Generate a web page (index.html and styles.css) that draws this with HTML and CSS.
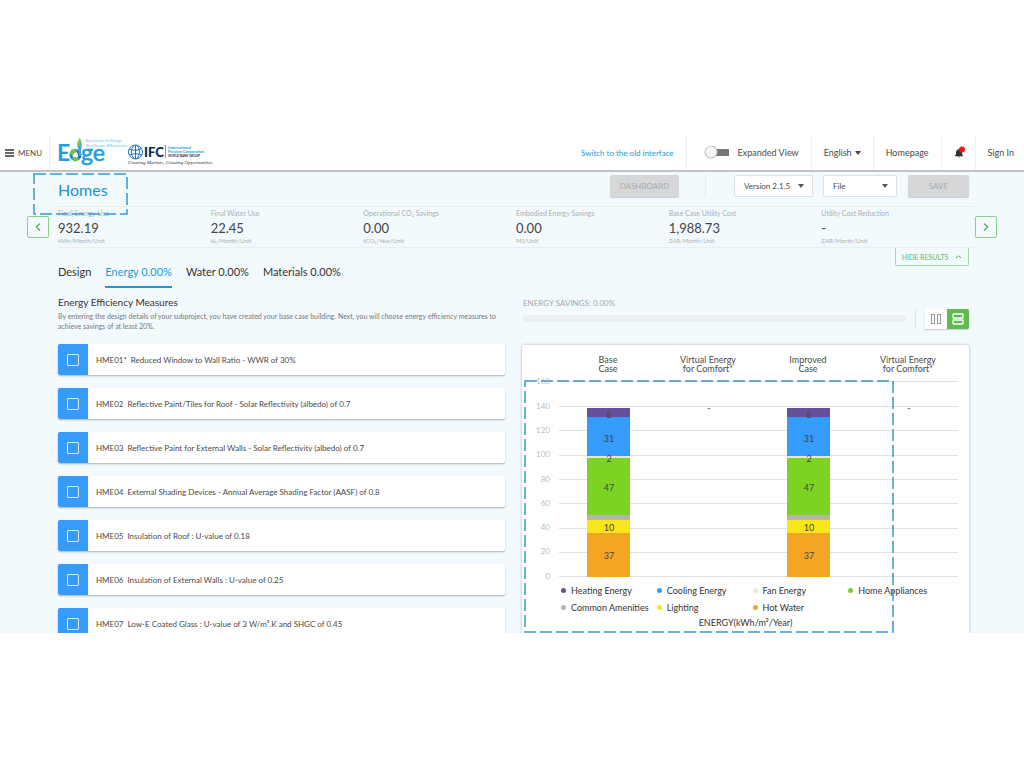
FILE: index.html
```html
<!DOCTYPE html>
<html lang="en">
<head>
<meta charset="utf-8">
<title>Edge – Homes</title>
<link rel="stylesheet" href="styles.css">
</head>
<body>
<div class="app">
  <header class="topbar">
    <button class="menu" type="button">
      <svg width="9" height="8" viewBox="0 0 9 8"><path d="M0 1h9M0 4h9M0 7h9" stroke="#333" stroke-width="1.5"/></svg>
      MENU
    </button>
    <a class="logo" href="#" aria-label="Edge and IFC">
      <svg width="160" height="34" viewBox="0 0 160 34">
        <g fill="#1ba1e0" font-family="Lato, sans-serif">
          <text x="-1" y="26" font-size="23" font-weight="700">E</text>
          <text x="23" y="26" font-size="23" font-weight="400" stroke="#1ba1e0" stroke-width=".6">ge</text>
          <text x="28" y="7" font-size="4" opacity=".7">Excellence in Design</text>
          <text x="28" y="12" font-size="4" opacity=".7">For Greater Efficiencies</text>
        </g>
        <circle cx="17.500" cy="20" r="4.500" fill="none" stroke="#1b8fd0" stroke-width="3.200"/>
        <path d="M11.500 19l2-4.500 4-1 1 3-4 3.500z" fill="#7ac143"/>
        <path d="M14 24l3-2 4 1-2 3-3 .5z" fill="#7ac143"/>
        <path d="M19 17l3-2 1 7-2 1z" fill="#1d5f9e"/>
        <path d="M20 13c-1-2-1-5 3-8 1 4 1 7 0 10v6h-2z" fill="#3fa9e0"/>
        <path d="M19 10c0-3 1-5 3-7 1.500 3 1 6-1 8z" fill="#8cc63f"/>
        <g fill="none" stroke="#1b75bc" stroke-width="1">
          <circle cx="77.500" cy="17" r="7"/>
          <path d="M71 14q7 3 13-1M71 20q6-3 13 0M76 10q-5 7 0 14M79 10q5 7 0 14M77.500 10v14"/>
        </g>
        <text x="86" y="22" font-size="13" font-weight="900" fill="#0b2a4a" font-family="Lato, sans-serif">IFC</text>
        <path d="M107.500 10v13" stroke="#4aa8dc"/>
        <g font-family="Lato, sans-serif" font-weight="700" fill="#189cd8">
          <text x="110" y="14" font-size="4">International</text>
          <text x="110" y="18" font-size="4">Finance Corporation</text>
          <text x="110" y="22" font-size="3" fill="#0b2a4a">WORLD BANK GROUP</text>
        </g>
        <text x="70" y="29" font-size="5" font-style="italic" fill="#333" font-family="Liberation Serif, serif">Creating Markets, Creating Opportunities</text>
      </svg>
    </a>
    <nav class="nav">
      <a class="nav-item switch-link" href="#">Switch to the old interface</a>
      <label class="nav-item expanded"><input class="toggle" type="checkbox">Expanded View</label>
      <button class="nav-item" type="button">English <span class="caret"></span></button>
      <a class="nav-item" href="#">Homepage</a>
      <button class="nav-item bell" type="button" aria-label="Notifications">
        <svg width="12" height="13" viewBox="0 0 12 13"><path d="M5 3c-2 .3-3 1.800-3 4 0 1.500-.5 2.300-1.500 3.200h9C8.500 9.300 8 8.500 8 7c0-2.200-1-3.700-3-4zM3.800 10.700h2.400q-1.200 1.500-2.400 0z" fill="#333"/><circle cx="8" cy="3.500" r="3" fill="#f21616"/></svg>
      </button>
      <a class="nav-item" href="#">Sign In</a>
    </nav>
  </header>

  <main class="page">
    <div class="title-row">
      <div class="title-wrap">
        <h1>Homes</h1>
        <svg class="mark mark-title" aria-hidden="true"><rect x="1" y="1" width="93" height="40"/></svg>
      </div>
      <div class="tools">
        <button class="gray dash" type="button" disabled>DASHBOARD</button>
        <span class="tool-line"></span>
        <select class="version" aria-label="Version"><option>Version 2.1.5</option></select>
        <select class="file" aria-label="File"><option>File</option></select>
        <button class="gray save" type="button" disabled>SAVE</button>
      </div>
    </div>

    <section class="results">
      <button class="arrow" type="button" aria-label="Previous"><svg width="6" height="10" viewBox="0 0 6 10"><path d="M5 1.500L1.500 5 5 8.500"/></svg></button>
      <div class="metrics">
        <div class="metric"><span>Final Energy Use</span><strong>932.19</strong><small>kWh/Month/Unit</small></div>
        <div class="metric"><span>Final Water Use</span><strong>22.45</strong><small>kL/Month/Unit</small></div>
        <div class="metric"><span>Operational CO₂ Savings</span><strong>0.00</strong><small>tCO₂/Year/Unit</small></div>
        <div class="metric"><span>Embodied Energy Savings</span><strong>0.00</strong><small>MJ/Unit</small></div>
        <div class="metric"><span>Base Case Utility Cost</span><strong>1,988.73</strong><small>ZAR/Month/Unit</small></div>
        <div class="metric"><span>Utility Cost Reduction</span><strong>-</strong><small>ZAR/Month/Unit</small></div>
      </div>
      <button class="arrow" type="button" aria-label="Next"><svg width="6" height="10" viewBox="0 0 6 10"><path d="M1 1.500L4.500 5 1 8.500"/></svg></button>
    </section>

    <div class="tab-row">
      <nav class="tabs">
        <a href="#">Design</a>
        <a class="active" href="#">Energy 0.00%</a>
        <a href="#">Water 0.00%</a>
        <a href="#">Materials 0.00%</a>
      </nav>
      <button class="hide" type="button">HIDE RESULTS <svg width="7" height="5" viewBox="0 0 7 5"><path d="M1 4l2.500-2.500L6 4" fill="none" stroke="#62b862"/></svg></button>
    </div>

    <div class="columns">
      <section class="measures">
        <h2>Energy Efficiency Measures</h2>
        <p>By entering the design details of your subproject, you have created your base case building. Next, you will choose energy efficiency measures to achieve savings of at least 20%.</p>
        <div class="list">
          <label class="row"><span class="tick"><input type="checkbox"></span><span class="code">HME01*</span>Reduced Window to Wall Ratio - WWR of 30%</label>
          <label class="row"><span class="tick"><input type="checkbox"></span><span class="code">HME02</span>Reflective Paint/Tiles for Roof - Solar Reflectivity (albedo) of 0.7</label>
          <label class="row"><span class="tick"><input type="checkbox"></span><span class="code">HME03</span>Reflective Paint for External Walls - Solar Reflectivity (albedo) of 0.7</label>
          <label class="row"><span class="tick"><input type="checkbox"></span><span class="code">HME04</span>External Shading Devices - Annual Average Shading Factor (AASF) of 0.8</label>
          <label class="row"><span class="tick"><input type="checkbox"></span><span class="code">HME05</span>Insulation of Roof : U-value of 0.18</label>
          <label class="row"><span class="tick"><input type="checkbox"></span><span class="code">HME06</span>Insulation of External Walls : U-value of 0.25</label>
          <label class="row"><span class="tick"><input type="checkbox"></span><span class="code">HME07</span>Low-E Coated Glass : U-value of 3 W/m².K and SHGC of 0.45</label>
        </div>
      </section>

      <section class="savings">
        <div class="savings-head">
          <div class="progress">
            <span>ENERGY SAVINGS: 0.00%</span>
            <div class="track"></div>
          </div>
          <div class="views">
            <button type="button" aria-label="Columns"><svg width="12" height="12" viewBox="0 0 12 12" fill="none" stroke="#999"><rect x="1.500" y="1.500" width="3" height="9"/><rect x="7.500" y="1.500" width="3" height="9"/></svg></button>
            <button class="on" type="button" aria-label="Rows"><svg width="12" height="12" viewBox="0 0 12 12" fill="none" stroke="#fff" stroke-width="1.300"><rect x="1" y="1" width="10" height="4" rx=".5"/><rect x="1" y="7" width="10" height="4" rx=".5"/></svg></button>
          </div>
        </div>
        <div class="card">
          <div class="heads">
            <span>Base<br>Case</span><span>Virtual Energy<br>for Comfort*</span><span>Improved<br>Case</span><span>Virtual Energy<br>for Comfort*</span>
          </div>
          <svg class="plot" viewBox="0 0 447 204">
            <path class="grid" d="M37 5.500H436M37 30.500H436M37 54.500H436M37 79.500H436M37 103.500H436M37 127.500H436M37 152.500H436M37 176.500H436M37 200.500H436"/>
            <g class="ticks">
              <text x="28" y="8">160</text><text x="28" y="33">140</text><text x="28" y="57">120</text><text x="28" y="81">100</text><text x="28" y="106">80</text><text x="28" y="130">60</text><text x="28" y="154">40</text><text x="28" y="178">20</text><text x="28" y="203">0</text>
            </g>
            <defs>
              <g id="bar">
                <rect y="32" width="43" height="9" fill="#64519a"/>
                <rect y="41" width="43" height="39" fill="#359cfc"/>
                <rect y="80" width="43" height="2" fill="#e6e6e6"/>
                <rect y="82" width="43" height="57" fill="#7dd321"/>
                <rect y="139" width="43" height="5" fill="#b5b5a8"/>
                <rect y="144" width="43" height="13" fill="#f8e71c"/>
                <rect y="157" width="43" height="44" fill="#f5a524"/>
                <g class="vals"><text x="22" y="42">8</text><text x="22" y="66">31</text><text x="22" y="86">2</text><text x="22" y="115">47</text><text x="22" y="155">10</text><text x="22" y="183">37</text></g>
              </g>
            </defs>
            <use href="#bar" x="65"/><use href="#bar" x="265"/>
            <g class="vals"><text x="187" y="35">-</text><text x="387" y="35">-</text></g>
          </svg>
          <ul class="legend">
            <li><i class="heating"></i>Heating Energy</li><li><i class="cooling"></i>Cooling Energy</li><li><i class="fan"></i>Fan Energy</li><li><i class="home"></i>Home Appliances</li>
            <li><i class="common"></i>Common Amenities</li><li><i class="lighting"></i>Lighting</li><li><i class="water"></i>Hot Water</li>
          </ul>
          <div class="axis">ENERGY(kWh/m²/Year)</div>
          <svg class="mark mark-chart" viewBox="0 0 371 254" aria-hidden="true"><rect x="1" y="1" width="368" height="251"/></svg>
        </div>
      </section>
    </div>
  </main>
</div>
</body>
</html>
```
FILE: styles.css
```css
* { box-sizing: border-box; }
body {
  margin: 0;
  height: 100vh;
  padding: 135px 0;
  display: flex;
  background: #fff;
  color: #4a4a4a;
  font-family: Lato, sans-serif;
  font-size: 8px;
}
button, select, input { font: inherit; color: inherit; margin: 0; }
button { border: 0; padding: 0; background: none; }
a { color: inherit; text-decoration: none; }
.app { flex: 1; min-width: 0; overflow: hidden; display: flex; flex-direction: column; background: #f3fafd; }

.topbar { flex: none; height: 37px; display: flex; background: #fff; border-bottom: 2px solid #bfc3c5; }
.menu { width: 50px; display: flex; align-items: center; gap: 4px; padding-left: 5px; border-right: 1px solid #eee; }
.logo { padding-left: 8px; }
.nav { flex: 1; display: flex; justify-content: flex-end; }
.nav-item { display: flex; align-items: center; padding: 0 12px; border-left: 1px solid #eee; white-space: nowrap; font-size: 9px; }
.nav-item:last-child { padding-right: 10px; }
.switch-link { border-left: 0; color: #1b9ad6; font-size: 8px; }
.expanded { padding-left: 17px; gap: 8px; }
.toggle { appearance: none; width: 26px; height: 13px; border-radius: 7px; background: radial-gradient(circle at 7px 6px, #f4f4f4 0 5px, #bbb 6px, transparent 7px), linear-gradient(#777, #777) 8px 3px / 17px 7px no-repeat; }
.caret { margin-left: 3px; border: 3px solid transparent; border-top: 4px solid #444; border-bottom: 0; }
.bell { padding: 0 9px 0 12px; }

.page { flex: none; padding: 0 55px 0 58px; }
.title-row { height: 34px; display: flex; justify-content: space-between; align-items: flex-start; }
.title-wrap { position: relative; }
h1 { margin: 8px 0 0; font-size: 16px; line-height: 20px; font-weight: 400; color: #1b91d8; }
.mark { position: absolute; pointer-events: none; }
.mark rect { fill: none; stroke: #3a97d4; stroke-width: 1.5; stroke-dasharray: 12 4; }
.mark-title { left: -25px; top: 1px; width: 95px; height: 43px; }
.tools { display: flex; padding-top: 3px; }
.tools > * { height: 22px; border-radius: 2px; }
.gray { background: #d5d7d8; color: #a9abac; font-size: 8px; box-shadow: 0 1px 1px #ccd; }
.dash { width: 69px; }
.tool-line { width: 1px; margin: 0 28px 0 26px; background: #e4eaed; }
select { appearance: none; padding: 0 9px; border: 1px solid #dde1e3; font-size: 8px; background: #fff url("data:image/svg+xml,%3Csvg xmlns='http://www.w3.org/2000/svg' width='6' height='4'%3E%3Cpath d='M0 0h6L3 4z' fill='%23555'/%3E%3C/svg%3E") right 8px center no-repeat; }
.version { width: 79px; margin-right: 10px; }
.file { width: 74px; margin-right: 11px; }
.save { width: 61px; }

.results { display: flex; align-items: center; margin: 0 -28px 0 -31px; }
.arrow { width: 22px; height: 22px; border: 1px solid #8ccf8c; border-radius: 2px; display: grid; place-items: center; }
.arrow path { fill: none; stroke: #5cb85c; stroke-width: 1.5; }
.metrics { flex: 1; margin: 0 1px 0 9px; height: 42px; display: grid; grid-template-columns: repeat(6, 1fr); border: solid #e8eef0; border-width: 1px 0; }
.metric { display: flex; flex-direction: column; white-space: nowrap; }
.metric span { font-size: 7px; line-height: 12px; color: #a9b0b3; }
.metric strong { font-size: 13px; line-height: 19px; font-weight: 400; color: #444; }
.metric small { font-size: 6px; line-height: 6px; color: #a9b0b3; }

.tab-row { display: flex; justify-content: space-between; align-items: flex-start; }
.tabs { display: flex; gap: 14px; font-size: 11px; line-height: 14px; padding-top: 17px; color: #333; }
.tabs a { padding-bottom: 7px; border-bottom: 2px solid transparent; white-space: nowrap; }
.tabs .active { color: #1b9ad6; border-color: #1b9ad6; }
.hide { width: 74px; height: 18px; border: 1px solid #a5dba5; border-top: 0; border-radius: 0 0 2px 2px; color: #62b862; font-size: 7px; display: flex; align-items: center; justify-content: center; gap: 7px; }

.columns { display: grid; grid-template-columns: 1fr 1fr; gap: 17px; padding-top: 8px; }
h2 { margin: 0; font-size: 10px; line-height: 13px; font-weight: 400; color: #333; }
.measures p { margin: 2px 0 13px; font-size: 7px; line-height: 10px; color: #777; }
.list { display: flex; flex-direction: column; gap: 13px; }
.row { height: 31px; display: flex; align-items: center; background: #fff; border-radius: 2px; box-shadow: 0 1px 2px #aab0b4; font-size: 8px; white-space: nowrap; }
.tick { width: 30px; height: 31px; display: grid; place-items: center; background: #359cfc; border-radius: 2px 0 0 2px; margin-right: 8px; }
.tick input { appearance: none; width: 12px; height: 12px; border: 1px solid #d8ecff; border-radius: 1px; }
.code { margin-right: 4px; }

.savings { min-width: 0; }
.savings-head { display: flex; height: 49px; align-items: flex-start; }
.progress { flex: 1; padding: 1px 9px 0 1px; color: #a3a9ac; font-size: 8px; line-height: 12px; }
.track { height: 7px; margin-top: 6px; border-radius: 3px; background: #ebeff0; }
.views { display: flex; margin-top: 13px; padding-left: 9px; border-left: 1px solid #dfe5e8; }
.views button { width: 22px; height: 20px; display: grid; place-items: center; background: #fff; box-shadow: 0 1px 1px #ccd; }
.views .on { background: #5fba4f; border-radius: 0 2px 2px 0; }
.card { position: relative; background: #fff; border-radius: 2px; box-shadow: 0 0 3px #a8b0b4; padding: 10px 0 30px; }
.heads { display: grid; grid-template-columns: repeat(4, 1fr); padding: 0 11px 0 36px; text-align: center; font-size: 9px; line-height: 9px; height: 21px; }
.plot { display: block; width: 100%; }
.grid { stroke: #e2e2e2; fill: none; }
.ticks { fill: #bbb; font-size: 8px; text-anchor: end; }
.vals { fill: #444; font-size: 9px; text-anchor: middle; }
.legend { list-style: none; margin: 2px 0 0; padding: 0 25px 0 39px; display: grid; grid-template-columns: repeat(4, 1fr); gap: 0; font-size: 9px; line-height: 17px; white-space: nowrap; color: #333; }
.legend li { display: flex; align-items: center; gap: 5px; min-width: 0; }
.legend i { flex: none; width: 5px; height: 5px; border-radius: 50%; }
.heating { background: #64519a; }
.cooling { background: #359cfc; }
.fan { background: #e6e6e6; }
.home { background: #7dd321; }
.common { background: #b5b5b5; }
.lighting { background: #f8e71c; }
.water { background: #f5a524; }
.axis { text-align: center; font-size: 9px; line-height: 14px; color: #333; }
.mark-chart { left: 2px; top: 35px; width: 83%; }
```
